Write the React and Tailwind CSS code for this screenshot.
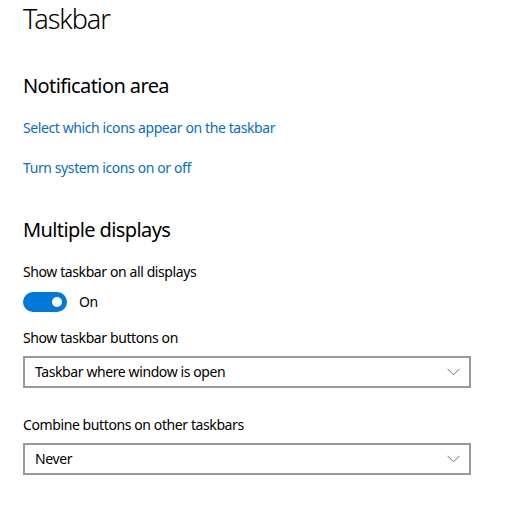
import React, { useState } from "react"

function Dropdown({ value }) {
  return (
    <div className="w-[448px] h-[32px] border-2 border-[#999999] bg-white flex items-center justify-between pl-[10px] pr-[9px]">
      <span className="text-[14px] leading-[20px] tracking-[-0.4px] text-black">{value}</span>
      <svg width="13" height="8" viewBox="0 0 13 8" fill="none">
        <path d="M0.5 0.8 L6.5 6.8 L12.5 0.8" stroke="#6b6b6b" strokeWidth="1" />
      </svg>
    </div>
  )
}

export default function App() {
  const [on, setOn] = useState(true)

  return (
    <div className="w-[507px] h-[509px] bg-white pl-[23px] text-black flex flex-col items-start overflow-hidden" style={{ fontFamily: '"Noto Sans", "Open Sans", sans-serif' }}>
      <h1 className="text-[27px] leading-[37px] tracking-[-1px] font-light">Taskbar</h1>

      <h2 className="mt-[35px] text-[20px] leading-[28px] tracking-[-0.6px] font-normal">Notification area</h2>
      <a className="block mt-[18px] text-[14px] leading-[20px] tracking-[-0.4px] text-[#0a6cc4]">Select which icons appear on the taskbar</a>
      <a className="block mt-[20px] text-[14px] leading-[20px] tracking-[-0.4px] text-[#0a6cc4]">Turn system icons on or off</a>

      <h2 className="mt-[38px] text-[20px] leading-[28px] tracking-[-0.6px] font-normal">Multiple displays</h2>
      <p className="mt-[18px] text-[14px] leading-[20px] tracking-[-0.4px]">Show taskbar on all displays</p>
      <div className="mt-[10px] flex items-center gap-[12px]">
        <button
          onClick={() => setOn(!on)}
          className={`w-[44px] h-[20px] rounded-full flex items-center px-[5px] ${on ? "bg-[#0078d7] justify-end" : "bg-white border-2 border-black justify-start"}`}
        >
          <span className={`w-[10px] h-[10px] rounded-full ${on ? "bg-white" : "bg-black"}`} />
        </button>
        <span className="text-[14px] leading-[20px] tracking-[-0.4px]">{on ? "On" : "Off"}</span>
      </div>

      <p className="mt-[16px] mb-[8px] text-[14px] leading-[20px] tracking-[-0.4px]">Show taskbar buttons on</p>
      <Dropdown value="Taskbar where window is open" />

      <p className="mt-[27px] mb-[8px] text-[14px] leading-[20px] tracking-[-0.4px]">Combine buttons on other taskbars</p>
      <Dropdown value="Never" />
    </div>
  )
}
